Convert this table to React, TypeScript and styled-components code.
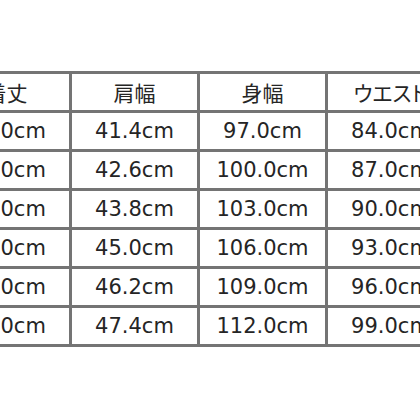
import React from "react";
import styled, { createGlobalStyle } from "styled-components";

const Global = createGlobalStyle`
  html, body {
    margin: 0;
    padding: 0;
    background: #ffffff;
    overflow: hidden;
    width: 420px;
    height: 420px;
  }
`;

const Page = styled.div`
  width: 420px;
  height: 420px;
  overflow: hidden;
  padding-top: 71px;
  box-sizing: border-box;
`;

const Table = styled.div`
  margin-left: -59px;
  display: grid;
  grid-template-columns: repeat(5, 125px);
  grid-auto-rows: 36px;
  gap: 3px;
  padding: 3px;
  background: #747474;
  width: max-content;
`;

const Cell = styled.div<{ $head?: boolean }>`
  background: #ffffff;
  display: flex;
  align-items: center;
  justify-content: center;
  color: #252525;
  font-family: ${(p) =>
    p.$head
      ? `"Noto Sans CJK JP", "Noto Sans", sans-serif`
      : `"DejaVu Sans", "Noto Sans CJK JP", sans-serif`};
  font-size: ${(p) => (p.$head ? "21px" : "21px")};
  font-feature-settings: ${(p) => (p.$head ? `"palt"` : "normal")};
  white-space: nowrap;
`;

const headers = ["着丈", "肩幅", "身幅", "ウエスト"];
const rows: string[][] = [
  ["70.0cm", "41.4cm", "97.0cm", "84.0cm"],
  ["72.0cm", "42.6cm", "100.0cm", "87.0cm"],
  ["74.0cm", "43.8cm", "103.0cm", "90.0cm"],
  ["76.0cm", "45.0cm", "106.0cm", "93.0cm"],
  ["78.0cm", "46.2cm", "109.0cm", "96.0cm"],
  ["80.0cm", "47.4cm", "112.0cm", "99.0cm"],
];

export default function App() {
  return (
    <>
      <Global />
      <Page>
        <Table>
          {headers.map((h) => (
            <Cell key={h} $head>
              {h}
            </Cell>
          ))}
          <Cell $head />
          {rows.map((r, i) => (
            <React.Fragment key={i}>
              {r.map((v, j) => (
                <Cell key={j}>{v}</Cell>
              ))}
              <Cell />
            </React.Fragment>
          ))}
        </Table>
      </Page>
    </>
  );
}
